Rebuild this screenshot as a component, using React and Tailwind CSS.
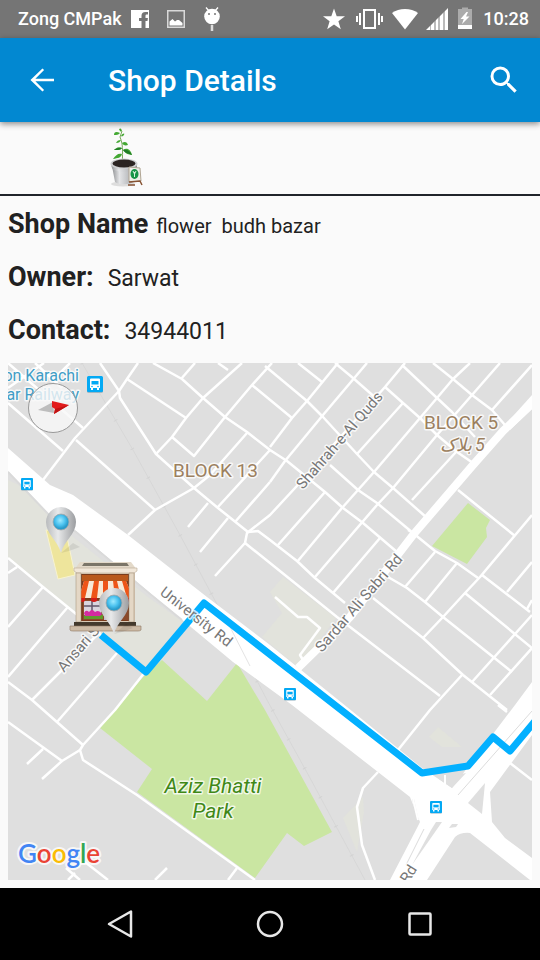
import React from "react";

const FONT = "font-[Roboto,'Liberation_Sans',sans-serif]";

function StatusBar() {
  return (
    <div className="flex h-[38px] items-center justify-between bg-[#757575] pr-[11px] pl-[18px] text-lg font-medium text-white">
      <div className="flex items-center gap-[18px]">
        <div className="flex items-center gap-[9px]">
          <span>Zong CMPak</span>
          <svg width="18" height="18" viewBox="0 0 18 18" aria-label="Facebook">
            <path fill="#fff" d="M0 0h18v18h-3.500v-7h2l.4-3h-2.400V6c0-1 .4-1.400 1.500-1.400H17V2h-2.500c-2.800 0-4 1.500-4 3.800V8H8v3h2.500v7H0z" />
          </svg>
        </div>
        <svg width="18" height="18" viewBox="0 0 18 18" aria-label="Picture">
          <path fill="none" stroke="#d9d9d9" strokeWidth="1.500" d="M.75.75h16.500v16.500H.75z" />
          <path fill="#fff" d="M2.500 15.500v-4l3-2.500 2.500 2.500 2-1.500 2 0 3.500 3v2.500z" />
        </svg>
        <svg width="18" height="24" viewBox="0 0 18 24" aria-label="Android">
          <path stroke="#fff" strokeWidth="1.300" d="M3 .5l3 3.500M15 .5L12 4" />
          <path stroke="#ddd" strokeWidth="2.500" d="M9 18v6" />
          <circle cx="9" cy="9.500" r="7.800" fill="#fff" />
          <circle cx="6" cy="7" r="1" fill="#757575" />
          <circle cx="12" cy="7" r="1" fill="#757575" />
        </svg>
      </div>
      <div className="flex items-center gap-2">
        <div className="flex items-center gap-[9px]">
          <svg width="24" height="24" viewBox="0 0 24 24" aria-label="Favourite">
            <path fill="#fff" d="M12 1.500l2.700 7.700 8.300.1-6.600 5 2.400 8-6.800-4.700-6.800 4.700 2.400-8-6.600-5 8.300-.1z" />
          </svg>
          <svg width="28" height="24" viewBox="0 0 28 24" aria-label="Vibrate">
            <path stroke="#fff" strokeWidth="2" fill="none" d="M9 3h11v18H9zM5 6v12M2 9v6M24 6v12M27 9v6" />
          </svg>
          <svg width="26" height="24" viewBox="0 0 26 24" aria-label="Wi-Fi">
            <path fill="#fff" d="M0 6C7 .500 19 .500 26 6L13 22.500z" />
          </svg>
        </div>
        <div className="flex items-center gap-[7px]">
          <svg width="22" height="24" viewBox="1 0 22 24" aria-label="Signal">
            <path fill="#fff" d="M1 23l4-4v4zM6 18l3-3v8H6zM11 13l2-2v12h-2zM15 9l3-3v17h-3zM20 4l3-3v22h-3z" />
            <path fill="#bbb" d="M5 19l1-1v5H5zM9 15l2-2v10H9zM13 11l2-2v14h-2zM18 6l2-2v19h-2z" />
          </svg>
          <svg width="20" height="24" viewBox="0 0 20 24" aria-label="Battery">
            <path fill="#ababab" d="M3 2h4V.500h6V2h4v16H3z" />
            <path fill="#fff" d="M3 18h14v4H3zM11.500 5l-6 7h3.200l-1.700 5 7.500-7.500h-3.500L13 5z" />
          </svg>
        </div>
        <span>10:28</span>
      </div>
    </div>
  );
}

function AppBar() {
  return (
    <header className="relative flex h-[84px] items-center bg-[#0288d1] px-6 text-white shadow-[0_2px_6px_rgba(0,0,0,0.45)]">
      <button aria-label="Back" className="size-9">
        <svg width="36" height="36" viewBox="0 0 24 24">
          <path fill="#fff" d="M20 11.200H7.600l5.800-5.800L12.300 4.300 4.300 12l8 7.700 1.100-1.100-5.800-5.800H20z" />
        </svg>
      </button>
      <h1 className="ml-12 flex-1 text-[30px] font-medium">Shop Details</h1>
      <button aria-label="Search" className="-mr-1.5 size-9">
        <svg width="36" height="36" viewBox="0 0 24 24">
          <path
            fill="#fff"
            d="M15.500 14h-.79l-.28-.27A6.471 6.471 0 0 0 16 9.500 6.500 6.500 0 1 0 9.500 16c1.610 0 3.090-.59 4.230-1.570l.27.28v.79l5 4.990L20.490 19l-4.990-5zm-6 0C7.010 14 5 11.990 5 9.500S7.010 5 9.500 5 14 7.010 14 9.500 11.990 14 9.500 14z"
          />
        </svg>
      </button>
    </header>
  );
}

function Plant() {
  return (
    <svg width="36" height="60" viewBox="0 0 36 60" aria-label="Potted plant">
      <defs>
        <linearGradient id="pot" x1="0" x2="1">
          <stop offset="0" stopColor="#8f9193" />
          <stop offset=".3" stopColor="#e4e5e7" />
          <stop offset=".7" stopColor="#b8babd" />
          <stop offset="1" stopColor="#898b8e" />
        </linearGradient>
      </defs>
      <ellipse cx="13" cy="56" rx="12" ry="2.500" fill="#ddd" />
      <path d="M12.500 37C12 28 14 18 10 9l2-6" fill="none" stroke="#79a85c" strokeWidth="1" />
      <g fill="#43a832">
        <path d="M12 3c-1-3-1-3-3-2 1 2 1 3 3 2zM10 5C6 3 4 4 4 7c3 0 4 0 6-2zM11 8c2-3 4-3 3-1-1 1-2 2-3 1z" />
        <path d="M11 12c-3 0-4 1-5 3 3 0 4-1 5-3zM12 15c3-2 5-1 6 2-3 1-5 0-6-2zM12 20c-4-2-6 0-8 2 4 0 7 0 8-2zM13 22c4-3 8 0 9 5-4-1-5 0-9-5zM12 26c-4-1-6 1-9 5 5-1 8-1 9-5z" />
      </g>
      <path d="M12 20c-3-1-6 1-8 2 4 0 7 0 8-2zM13 22c4-1 7 1 9 5-4-2-6-1-9-5z" fill="#217b28" />
      <path d="M2 38l3 16c4 3 14 3 18 0l4-16z" fill="url(#pot)" />
      <ellipse cx="14" cy="36" rx="13.500" ry="5.500" fill="#cfd0d2" />
      <ellipse cx="14" cy="35.500" rx="11.500" ry="4" fill="#2b2422" />
      <path d="M1 37c2 5 23 5 26 0v3c-3 5-23 5-25 0z" fill="url(#pot)" />
      <path d="M19 39l11 1 1 13-12 1z" fill="#eceee8" stroke="#b0a593" strokeWidth="1" />
      <ellipse cx="24.500" cy="46" rx="4" ry="5" fill="#159447" />
      <path d="M24.500 44v5M23 43l1.500 3 1.500-3" stroke="#d9f2df" strokeWidth="1" fill="none" />
      <path d="M19 54l11-1 2 4M18 57h7" stroke="#875334" strokeWidth="1.500" fill="none" />
    </svg>
  );
}

function Detail({ label, value, valueClass }) {
  return (
    <div className="flex h-[53px] items-baseline">
      <dt className="text-[27px] leading-10 font-bold">{label}</dt>
      <dd className={valueClass}>{value}</dd>
    </div>
  );
}

const streets = [
  "M100 363L119 391 120 398 156 454 194 488 218 508 248 532 258 531 270 540 297 561 315 578 333 593 345 603",
  "M138 363L127 379 119 391 75 438 43 480",
  "M127 379L186 418",
  "M76 440L155 510 194 488M155 510L128 535",
  "M8 403L63 451M8 363L83 428M35 363L62 388M8 388L44 363M70 363L55 378",
  "M153 363L182 379 203 398 225 417 247 432 270 450 287 461 325 492 343 508 363 523 397 552",
  "M195 363L181 379M218 363L228 370M242 363L203 398 186 418 172 437 156 454",
  "M172 437L194 456 225 417 252 385 272 363",
  "M247 433L210 475 194 488M252 385L292 418M270 450L217 508M270 482L235 522",
  "M208 503L188 527M228 518L200 552M298 363L322 382",
  "M338 363L307 401 292 418 270 447M367 363L323 415 285 461 270 482",
  "M405 363L385 387 295 488 270 515 247 533 245 543 215 576",
  "M265 366L307 401 323 417 357 454 374 472 393 488 426 517",
  "M335 363L353 378 378 400M385 387L403 403 420 418 437 435 457 452 473 463",
  "M402 365L437 398 452 412 475 437M433 363L453 379 472 395 492 410 505 425",
  "M470 363L453 379 437 398 420 418 374 472 358 490 342 508 297 562",
  "M500 363L472 395 437 435 393 488 377 505 315 577M532 365L492 410",
  "M403 403L357 454M456 452L412 500M330 465L358 490 377 503 413 533",
  "M325 492L278 545M380 538L333 593M245 543L270 563 337 617 440 696",
  "M408 530L413 533 435 551 457 563 478 578M482 575L530 612",
  "M435 552L405 587M457 563L425 602M458 490L515 536M532 515L480 577 465 593 443 617 423 638",
  "M388 577L407 588 425 602 443 617 512 672M373 598L423 638 463 675 507 710",
  "M465 593L532 648M532 562L507 592M532 600L527 609M532 615L472 682M532 648L490 695",
  "M462 675L430 710 398 750M498 705L507 712M510 763L532 780",
  "M8 558L43 587 75 613 110 643M8 573L17 567M43 587L8 627M67 608L8 677M100 632L32 700",
  "M117 653L57 722M145 672L115 710 83 745 80 750 83 760 137 795 255 880",
  "M8 682L32 700 83 745M8 722L62 761 80 750M62 761L42 779M43 749L27 764",
  "M85 862L108 880M66 868L80 880M75 873L68 880M167 868L155 880M237 868L228 880",
  "M378 772L363 788 357 807 362 845 375 880",
];

function Pin({ x, y }) {
  return (
    <g transform={`translate(${x} ${y})`}>
      <path d="M0 0L12-10 19-6 8-2z" fill="#000" opacity=".08" />
      <path d="M0 0C-3-12-15-19-15-31a15 15 0 0 1 30 0C15-19 3-12 0 0z" fill="url(#pin)" />
      <circle cx="0" cy="-31" r="8" fill="url(#gem)" stroke="#a5a8aa" strokeWidth=".8" />
    </g>
  );
}

function Stop({ x, y, size }) {
  return (
    <g transform={`translate(${x} ${y}) scale(${size / 16})`}>
      <rect width="16" height="16" y=".8" rx="1.500" fill="#8ab" />
      <rect width="16" height="16" rx="1.500" fill="#03a9f4" />
      <path fill="#fff" d="M4 2.500h8q1 0 1 1V12H3V3.500q0-1 1-1zM4 12h2v2H4zM10 12h2v2h-2z" />
      <path fill="#03a9f4" d="M4.500 5h7v3.500h-7z" />
      <circle cx="5" cy="10.500" r=".8" fill="#03a9f4" />
      <circle cx="11" cy="10.500" r=".8" fill="#03a9f4" />
    </g>
  );
}

function Shop() {
  return (
    <g>
      <path d="M80 562h51l6 8H74z" fill="#e3d9c9" />
      <path d="M84 563h43l2 3H82z" fill="#7b7568" />
      <path d="M77 572h58v51H77z" fill="#d9c9b5" />
      <path d="M80 574h49v47H80z" fill="#7a3c1d" />
      <path d="M82 575h46v6H82z" fill="#b9581c" />
      <path d="M83 600h45v20H83z" fill="#8a4a2b" />
      <path d="M84 601h17v16H84z" fill="#d9d4dd" />
      <path d="M92 601v11M84 606h17" stroke="#62566a" strokeWidth="1.500" />
      <path d="M84 615h19v4H84z" fill="#62992e" />
      <path d="M84 613q2-4 5-1 3-4 6 0 4-3 7 2l-2 2H85z" fill="#d42ba0" />
      <path d="M104 602h17v18h-17z" fill="#c7bfd0" />
      <path d="M84 581h42l7 17H79z" fill="#f6ead8" />
      <g fill="#ee5518">
        <path d="M84 581h5l-4 17h-6zM94 581h5l-2 17h-6zM103 581h5v17h-5zM113 581h4l4 17h-6zM122 581h4l7 17h-6z" />
      </g>
      <g fill="#d31c17">
        <path d="M79 598h6v3q-3 2-6 0zM91 598h6v3q-3 2-6 0zM103 598h5v3q-3 2-5 0zM115 598h6v3q-3 2-6 0zM127 598h6v3q-3 2-6 0z" />
      </g>
      <path d="M74 568h63v3l-3 2H77l-3-2z" fill="#f1e7d9" stroke="#b9aa96" strokeWidth=".6" />
      <path d="M76 573h5v49h-5zM129 573h5v49h-5z" fill="#e4d7c5" stroke="#9c8872" strokeWidth=".5" />
      <path d="M74 622h62v5H74z" fill="#443a2d" />
      <path d="M70 626h71v4q-1 1-3 1H73q-3 0-3-1z" fill="#cdbba6" stroke="#8d7763" strokeWidth=".6" />
    </g>
  );
}

function CityMap() {
  return (
    <svg
      className={`absolute inset-0 size-full ${FONT}`}
      viewBox="8 363 524 517"
      preserveAspectRatio="xMidYMid slice"
      aria-label="Map of route to the shop"
    >
      <defs>
        <linearGradient id="pin" x1="0" x2="1">
          <stop offset="0" stopColor="#b9bbbd" />
          <stop offset=".4" stopColor="#e8e9ea" />
          <stop offset="1" stopColor="#9b9da0" />
        </linearGradient>
        <radialGradient id="gem" cx=".45" cy=".4">
          <stop offset="0" stopColor="#9feaff" />
          <stop offset=".6" stopColor="#4cc3f0" />
          <stop offset="1" stopColor="#2b9ccb" />
        </radialGradient>
      </defs>
      <path fill="#dfdfdf" d="M8 363h524v517H8z" />

      <g fill="#e2e3dc">
        <path d="M8 480L25 488 67 532 148 597 183 622 162 662 145 672 67 608 8 558z" />
        <path d="M270 592L283 577 336 618 299 668 262 637 282 613z" />
        <path d="M363 797L364 812 357 852 343 818zM438 727L462 747H442L429 737z" />
      </g>
      <g fill="#cae6a2">
        <path d="M162 660L207 701 237 663 265 710 332 832 304 846 287 833 255 878 137 792 152 769 100 728 143 677z" />
        <path d="M468 503L490 520 486 528 487 537 467 564 432 546z" />
      </g>
      <path d="M46 530L66 532 75 575 58 579z" fill="#eee59c" stroke="#f8f3cf" />

      <path d="M82 363L133 450 180 535 227 623 267 700 310 778 365 880" fill="none" stroke="#d7d7d7" />
      <path
        d="M82 363L133 450 180 535 227 623 267 700 310 778 365 880"
        fill="none"
        stroke="#d3d3d3"
        strokeWidth="4"
        strokeDasharray="1 32"
      />

      <g fill="none" stroke="#fff" strokeWidth="2.500" strokeLinejoin="round">
        {streets.map((d) => (
          <path key={d} d={d} />
        ))}
        <path d="M275 597L298 617H307L320 628 300 655 303 660" />
      </g>
      <path d="M534 402L503 431 473 465 413 535 350 617 298 668" fill="none" stroke="#fff" strokeWidth="8" />
      <path d="M532 395L505 425 510 430 532 409z" fill="#fff" />

      <path
        fill="#fff"
        d="M8 448L50 485 73 495 128 535 207 597 270 645 347 707 422 768 437 778 452 788 515 705 532 682V735L490 792 492 822 505 838 532 858V880H530L470 833Q461 832 455 837L427 880H390L417 828 420 822 410 797 378 772 292 705 233 662 150 593 75 530 50 515 8 471z"
      />
      <path d="M8 472L50 516 76 532 150 594 182 620" fill="none" stroke="#dadada" strokeWidth="2" />
      <g fill="#dfdfdf">
        <path d="M468 803L485 783 482 814zM439 779L466 773 452 788zM412 799L414 799 419 822 417 822z" />
        <path d="M436 822L442 822 412 865 431 830zM452 824L458 824 456 827 449 828z" />
      </g>
      <path d="M445 775V785M413 799L418 820" stroke="#fff" strokeWidth="2" />
      <path d="M532 711L458 795M424 829L406 865" stroke="#dcdcdc" strokeWidth="1" />
      <path d="M228 623L250 666" stroke="#e4e4e4" fill="none" />

      <path
        d="M101 635L146 672 204 603 422 773 468 766 493 737 510 751 536 720"
        fill="none"
        stroke="#03b0ff"
        strokeWidth="7"
        strokeLinejoin="round"
      />

      <Stop x={87} y={376} size={16} />
      <Stop x={21} y={478} size={12} />
      <Stop x={284} y={688} size={12} />
      <Stop x={430} y={801} size={12} />

      <g stroke="#fff" strokeOpacity=".75" strokeWidth="3" strokeLinejoin="round" paintOrder="stroke">
        <g fill="#409dc6" fontSize="16" textAnchor="end">
          <text x="79" y="381">ion Karachi</text>
          <text x="79" y="400">ular Railway</text>
        </g>
        <g fill="#9c8060" fontSize="19">
          <text x="173" y="477">BLOCK 13</text>
          <text x="424" y="429">BLOCK 5</text>
          <text x="440" y="451" fontSize="18" fontStyle="italic" direction="ltr">
            <tspan>بلاک</tspan>
            <tspan x="475">5</tspan>
          </text>
        </g>
        <g fill="#777" fontSize="15">
          <text transform="translate(303 490) rotate(-49)">Shahrah-e-Al Quds</text>
          <text transform="translate(322 653) rotate(-49)">Sardar Ali Sabri Rd</text>
          <text transform="translate(159 594) rotate(38)">University Rd</text>
          <text transform="translate(64 673) rotate(-49)">Ansari St</text>
          <text transform="translate(408 884) rotate(-58)">Rd</text>
        </g>
        <g fill="#3f8817" fontSize="21" fontStyle="italic" textAnchor="middle">
          <text x="213" y="793">Aziz Bhatti</text>
          <text x="213" y="818">Park</text>
        </g>
        <text x="18" y="863" fontSize="26" strokeWidth="4" className="font-[Lato,sans-serif] font-semibold">
          <tspan fill="#4285f4">G</tspan>
          <tspan fill="#ea4335">o</tspan>
          <tspan fill="#fbbc05">o</tspan>
          <tspan fill="#4285f4">g</tspan>
          <tspan fill="#34a853">l</tspan>
          <tspan fill="#ea4335">e</tspan>
        </text>
      </g>

      <Pin x={61} y={553} />
      <Shop />
      <Pin x={114} y={634} />
    </svg>
  );
}

function NavBar() {
  return (
    <nav className="flex h-[72px] items-center justify-center gap-[114px] bg-black">
      <button aria-label="Back" className="size-9">
        <svg width="36" height="36" viewBox="0 0 36 36">
          <path d="M29 5.500v25L7 18z" fill="none" stroke="#e8e8e8" strokeWidth="2.500" strokeLinejoin="round" />
        </svg>
      </button>
      <button aria-label="Home" className="size-9">
        <svg width="36" height="36" viewBox="0 0 36 36">
          <circle cx="18" cy="18" r="12" fill="none" stroke="#e8e8e8" strokeWidth="2.500" />
        </svg>
      </button>
      <button aria-label="Recent apps" className="size-9">
        <svg width="36" height="36" viewBox="0 0 36 36">
          <rect x="7.500" y="7.500" width="21" height="21" rx="1" fill="none" stroke="#e8e8e8" strokeWidth="2.500" />
        </svg>
      </button>
    </nav>
  );
}

export default function App() {
  return (
    <div className={`flex min-h-screen flex-col bg-[#fafafa] text-[#212121] ${FONT}`}>
      <StatusBar />
      <AppBar />
      <main className="flex flex-1 flex-col">
        <div className="border-b-2 border-[#20242a] pt-1.5 pb-1.5 pl-[110px]">
          <Plant />
        </div>
        <dl className="flex flex-col px-2 pt-2">
          <Detail label="Shop Name" value="flower  budh bazar" valueClass="ml-2 whitespace-pre text-xl" />
          <Detail label="Owner:" value="Sarwat" valueClass="ml-[14px] text-[23px]" />
          <Detail label="Contact:" value="34944011" valueClass="ml-[14px] text-[23px]" />
        </dl>
        <div className="flex flex-1 px-2 pb-2">
          <div className="relative min-h-96 flex-1 overflow-hidden">
            <CityMap />
            <button
              aria-label="Reset compass"
              className="absolute top-5 left-5 size-[50px] rounded-full border border-[#999] bg-[#f8f8f8]/80"
            >
              <svg width="48" height="48" viewBox="0 0 48 48">
                <path d="M24 18L9 26l16 3z" fill="#bdbdbd" />
                <path d="M23 17l17 4-15 9 1-5-3-2z" fill="#e21b1b" />
                <path d="M40 21l-15 9 1-5z" fill="#c01212" />
              </svg>
            </button>
          </div>
        </div>
      </main>
      <NavBar />
    </div>
  );
}
